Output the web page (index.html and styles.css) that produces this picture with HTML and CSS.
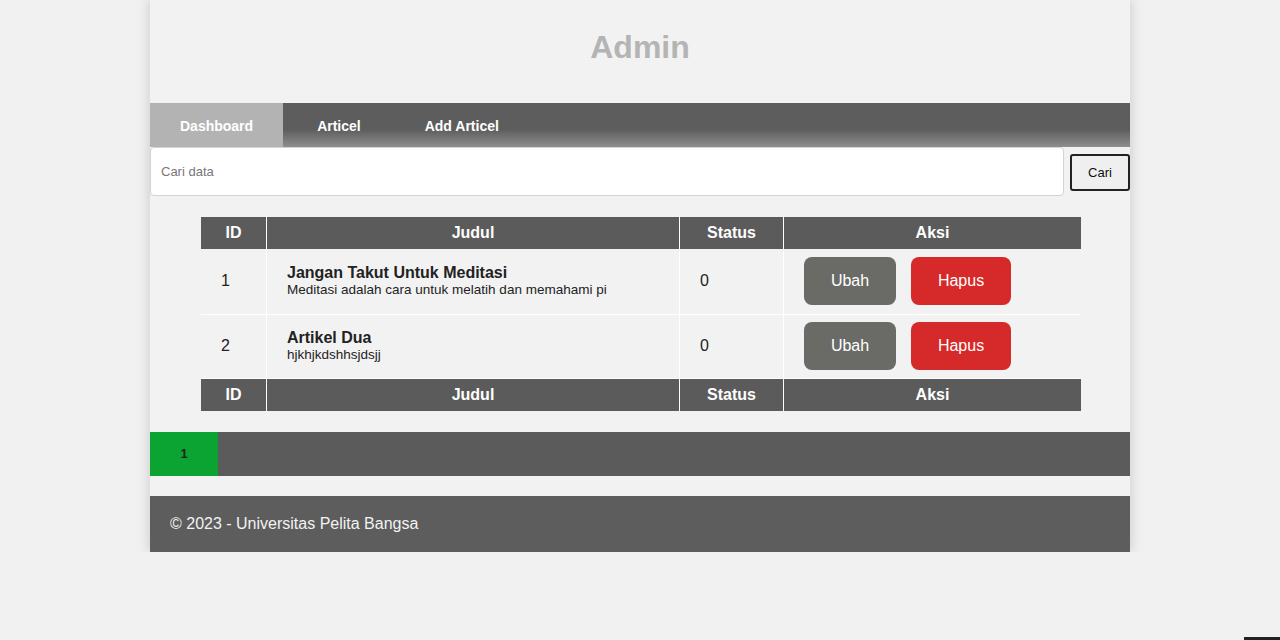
FILE: index.html
```html
<!DOCTYPE html>
<html lang="id">
<head>
<meta charset="utf-8">
<title>Admin</title>
<link rel="stylesheet" href="styles.css">
</head>
<body>
<div class="container">
  <header class="header"><h1>Admin</h1></header>
  <nav class="nav">
    <a href="#" class="active">Dashboard</a>
    <a href="#">Articel</a>
    <a href="#">Add Articel</a>
  </nav>
  <form class="search">
    <input type="text" class="search-input" placeholder="Cari data">
    <button type="button" class="search-btn">Cari</button>
  </form>
  <table class="data">
    <thead>
      <tr><th class="c-id">ID</th><th class="c-judul">Judul</th><th class="c-status">Status</th><th class="c-aksi">Aksi</th></tr>
    </thead>
    <tbody>
      <tr>
        <td>1</td>
        <td><div class="title">Jangan Takut Untuk Meditasi</div><div class="desc">Meditasi adalah cara untuk melatih dan memahami pi</div></td>
        <td>0</td>
        <td><div class="actions"><a href="#" class="btn btn-ubah">Ubah</a><a href="#" class="btn btn-hapus">Hapus</a></div></td>
      </tr>
      <tr>
        <td>2</td>
        <td><div class="title">Artikel Dua</div><div class="desc">hjkhjkdshhsjdsjj</div></td>
        <td>0</td>
        <td><div class="actions"><a href="#" class="btn btn-ubah">Ubah</a><a href="#" class="btn btn-hapus">Hapus</a></div></td>
      </tr>
    </tbody>
    <tfoot>
      <tr><th>ID</th><th>Judul</th><th>Status</th><th>Aksi</th></tr>
    </tfoot>
  </table>
  <div class="pagination"><a href="#" class="page active">1</a></div>
  <footer class="footer">© 2023 - Universitas Pelita Bangsa</footer>
</div>
<div class="corner"></div>
</body>
</html>
```

FILE: styles.css
```css
html, body {
  margin: 0;
  padding: 0;
  background: #f1f1f1;
  font-family: "Liberation Sans", Arial, sans-serif;
  color: #222;
}

.container {
  width: 980px;
  margin: 0 auto;
  background: #f2f2f2;
  box-shadow: 0 0 12px rgba(0, 0, 0, 0.18);
}

.header {
  height: 103px;
  display: flex;
  align-items: center;
  justify-content: center;
}

.header h1 {
  margin: 0;
  font-size: 32px;
  font-weight: bold;
  color: #b4b4b4;
  line-height: 1;
  position: relative;
  top: -5px;
}

.nav {
  display: flex;
  gap: 4px;
  height: 44px;
  background: linear-gradient(to bottom, #5d5d5d 0%, #5d5d5d 60%, #8e8e8e 100%);
}

.nav a {
  display: flex;
  align-items: center;
  padding: 2px 30px 0;
  color: #fff;
  font-size: 14px;
  font-weight: bold;
  text-decoration: none;
}

.nav a.active {
  background: #b3b3b3;
}

.search {
  display: flex;
  align-items: flex-start;
  gap: 6px;
  margin: 0 0 21px;
}

.search-input {
  flex: 1;
  height: 49px;
  box-sizing: border-box;
  border: 1px solid #d3d3d3;
  border-radius: 4px;
  background: #fff;
  padding: 0 10px;
  font-family: "Liberation Sans", Arial, sans-serif;
  font-size: 13px;
  color: #333;
  outline: none;
}

.search-input::placeholder {
  color: #777;
}

.search-btn {
  width: 60px;
  height: 37px;
  margin-top: 7px;
  box-sizing: border-box;
  border: 2px solid #222;
  border-radius: 3px;
  background: #efefef;
  font-family: "Liberation Sans", Arial, sans-serif;
  font-size: 13px;
  color: #111;
  padding: 0;
}

.data {
  width: 880px;
  margin: 0 49px 0 51px;
  border-collapse: collapse;
}

.data th {
  background: #5b5b5b;
  color: #fff;
  font-size: 16px;
  font-weight: bold;
  height: 32px;
  padding: 0;
  border: 1px solid #fff;
  border-top: none;
  border-bottom: none;
  text-align: center;
}

.data tr > :first-child { border-left: none; }
.data tr > :last-child { border-right: none; }

.c-id { width: 65px; }
.c-judul { width: 412px; }
.c-status { width: 103px; }

.data td {
  height: 64px;
  box-sizing: border-box;
  padding: 0 20px;
  border: 1px solid #fff;
  font-size: 16px;
  vertical-align: middle;
}

.data tbody tr:first-child td {
  border-top: none;
  height: 65px;
}

.title {
  font-size: 16px;
  font-weight: bold;
  color: #222;
  line-height: 18px;
}

.desc {
  font-size: 13.5px;
  color: #222;
  line-height: 16px;
}

.actions {
  display: flex;
  gap: 15px;
}

.btn {
  display: flex;
  align-items: center;
  justify-content: center;
  height: 48px;
  border-radius: 8px;
  color: #fff;
  font-size: 16px;
  text-decoration: none;
}

.btn-ubah {
  width: 92px;
  background: #6a6a67;
}

.btn-hapus {
  width: 100px;
  background: #d62929;
}

.pagination {
  display: flex;
  height: 44px;
  margin-top: 21px;
  background: #5b5b5b;
}

.page {
  display: flex;
  align-items: center;
  justify-content: center;
  width: 68px;
  color: #222;
  font-size: 13px;
  font-weight: bold;
  text-decoration: none;
}

.page.active {
  background: #0ba433;
}

.footer {
  margin-top: 20px;
  height: 56px;
  display: flex;
  align-items: center;
  padding: 0 20px;
  background: #5d5d5d;
  color: #f2f2f2;
  font-size: 16px;
}

.corner {
  position: fixed;
  right: 0;
  bottom: 0;
  width: 36px;
  height: 3px;
  background: #222;
}
```
